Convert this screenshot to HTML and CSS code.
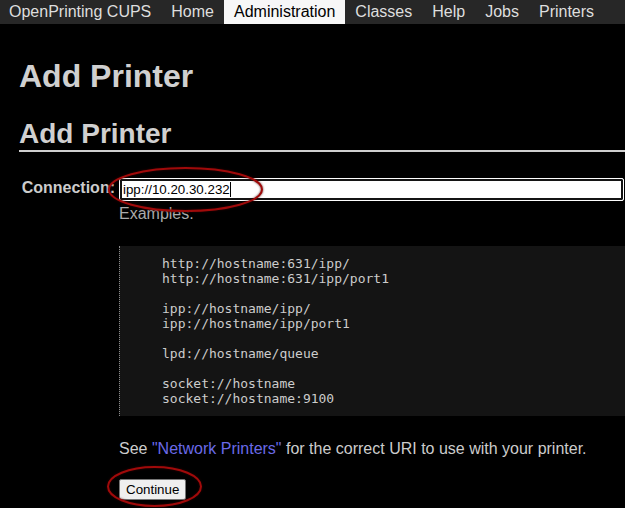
FILE: index.html
```html
<!DOCTYPE html>
<html lang="en">
<head>
<meta charset="utf-8">
<title>Add Printer - CUPS</title>
<link rel="stylesheet" href="styles.css">
</head>
<body>
<nav class="navbar">
  <a class="nav-item brand" href="#">OpenPrinting CUPS</a>
  <a class="nav-item" href="#">Home</a>
  <a class="nav-item active" href="#">Administration</a>
  <a class="nav-item" href="#">Classes</a>
  <a class="nav-item" href="#">Help</a>
  <a class="nav-item" href="#">Jobs</a>
  <a class="nav-item" href="#">Printers</a>
</nav>
<main class="main">
  <h1 class="title">Add Printer</h1>
  <h2 class="subtitle">Add Printer</h2>
  <div class="field">
    <div class="field-label">Connection:</div>
    <div class="field-body">
      <div class="text-input" role="textbox">ipp://10.20.30.232<span class="caret"></span></div>
      <div class="examples-label">Examples:</div>
<pre class="examples">http://hostname:631/ipp/
http://hostname:631/ipp/port1

ipp://hostname/ipp/
ipp://hostname/ipp/port1

lpd://hostname/queue

socket://hostname
socket://hostname:9100</pre>
      <p class="hint">See <a class="link" href="#">"Network Printers"</a> for the correct URI to use with your printer.</p>
      <button class="button" type="button">Continue</button>
    </div>
  </div>
</main>
<svg class="annotations" width="625" height="508" viewBox="0 0 625 508" aria-hidden="true">
  <ellipse cx="185.5" cy="189.5" rx="76.5" ry="21.5" class="ring"/>
  <ellipse cx="154.5" cy="486.5" rx="46.5" ry="19.5" class="ring"/>
</svg>
</body>
</html>
```
FILE: styles.css
```css
html, body {
  margin: 0;
  padding: 0;
  background: #000;
  overflow: hidden;
}
body {
  font-family: "Liberation Sans", Arial, sans-serif;
  font-size: 16px;
  color: #cccccc;
  width: 625px;
  height: 508px;
  position: relative;
}
.navbar {
  display: flex;
  height: 24px;
  background: #272727;
}
.nav-item {
  display: block;
  padding: 0 10px;
  line-height: 24px;
  color: #dedede;
  text-decoration: none;
  font-size: 16px;
}
.nav-item.brand {
  padding-left: 9px;
}
.nav-item.active {
  background: #f7f7f7;
  color: #000;
}
.main {
  padding-left: 19px;
}
.title {
  margin: 34px 0 0 0;
  font-size: 32px;
  line-height: 36px;
  font-weight: bold;
  color: #d0d0d0;
}
.subtitle {
  margin: 24px 0 0 0;
  font-size: 28px;
  line-height: 31px;
  font-weight: bold;
  color: #d0d0d0;
  padding-bottom: 1px;
  border-bottom: 2px solid #cfcfcf;
}
.field {
  display: grid;
  grid-template-columns: 100px 1fr;
  margin-top: 26px;
}
.field-label {
  font-weight: bold;
  text-align: right;
  padding-right: 4px;
  padding-top: 1px;
  line-height: 18px;
  color: #cccccc;
}
.field-body {
  display: flex;
  flex-direction: column;
  align-items: flex-start;
}
.text-input {
  box-sizing: border-box;
  width: 505px;
  height: 23px;
  padding: 0 0 0 3px;
  border: 1px solid #ffffff;
  box-shadow: inset 0 0 0 2px #141414;
  border-radius: 2px;
  background: #fff;
  color: #000;
  font-family: "Liberation Sans", Arial, sans-serif;
  font-size: 13.333px;
  line-height: 21px;
  white-space: nowrap;
}
.caret {
  display: inline-block;
  width: 1px;
  height: 15px;
  background: #000;
  vertical-align: -3px;
}
.examples-label {
  margin-top: 4px;
  line-height: 18px;
  color: #ababab;
}
.examples {
  box-sizing: border-box;
  align-self: stretch;
  margin: 23px 0 0 0;
  padding: 10px 0 10px 42px;
  background: #141414;
  border-left: 1px dotted #8a8a8a;
  font-family: "DejaVu Sans Mono", monospace;
  font-size: 13px;
  line-height: 15px;
  color: #cccccc;
}
.hint {
  margin: 24px 0 0 0;
  line-height: 18px;
  color: #cccccc;
}
.link {
  color: #6a6ae8;
  text-decoration: none;
}
.button {
  margin-top: 21px;
  box-sizing: border-box;
  height: 21px;
  padding: 1px 6px;
  border: 1px solid #767676;
  border-radius: 2px;
  background: #efefef;
  color: #000;
  font-family: "Liberation Sans", Arial, sans-serif;
  font-size: 13.333px;
  line-height: 15px;
}
.annotations {
  position: absolute;
  top: 0;
  left: 0;
  pointer-events: none;
}
.ring {
  fill: none;
  stroke: #a00a0a;
  stroke-width: 2;
  filter: drop-shadow(0 0 1px rgba(60, 0, 0, 0.8));
}
```
